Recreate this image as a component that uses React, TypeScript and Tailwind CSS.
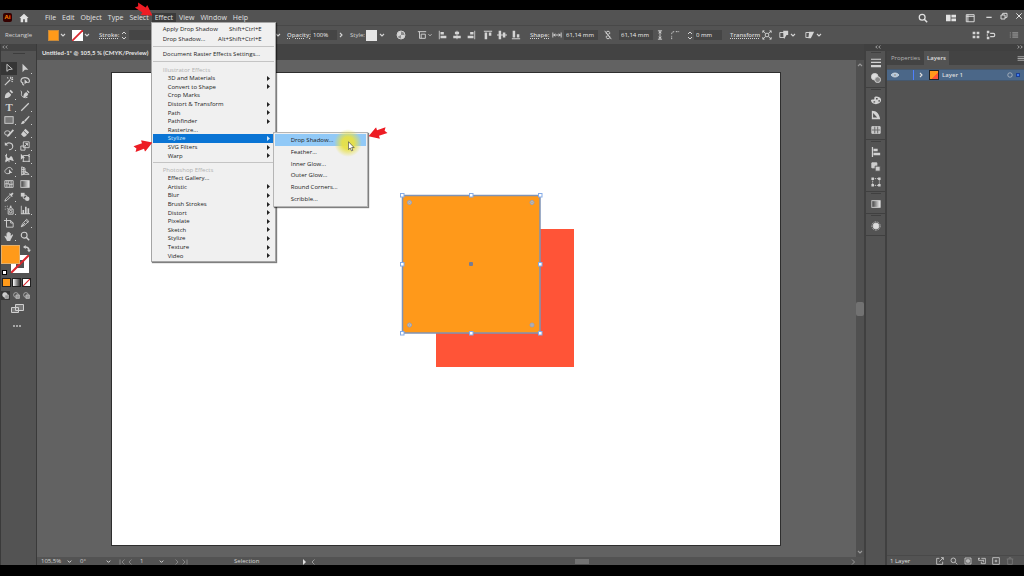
import type { ReactNode } from "react";
import { clsx } from "clsx";

type IconProps = { children: ReactNode; className?: string };

// 12x12 line icon, coloured by the text colour
function Icon({ children, className }: IconProps) {
  return (
    <svg
      viewBox="0 0 12 12"
      className={clsx("shrink-0", className ?? "size-[10px]")}
      fill="none"
      stroke="currentColor"
      strokeWidth="1.1"
      aria-hidden="true"
    >
      {children}
    </svg>
  );
}

const solid = { fill: "currentColor", stroke: "none" };

function Chevron({ className }: { className?: string }) {
  return (
    <Icon className={className ?? "h-[8px] w-[8px]"}>
      <path d="M3 4.5 6 7.5 9 4.5" strokeWidth="1.7" />
    </Icon>
  );
}

function Stepper({ label }: { label: string }) {
  return (
    <button aria-label={label} className="w-[6px] shrink-0">
      <svg viewBox="0 0 6 11" className="h-[11px] w-[6px]" fill="none" stroke="currentColor">
        <path d="M1 4 3 2 5 4M1 7 3 9 5 7" />
      </svg>
    </button>
  );
}

const tools: { name: string; icon: ReactNode; more?: boolean }[] = [
  { name: "Selection", icon: <path d="M3.5 1.5v8.5L6 7.8l4-.5z" /> },
  { name: "Direct Selection", more: true, icon: <path d="M3 1v10l2.8-2.8L10 8z" {...solid} /> },
  {
    name: "Magic Wand",
    icon: <path d="M1 11 7.5 4.5M8 1v2.5M11 4H8.8M4 1.5l1 1.5M10.5 7 9 6M10.5 1.5l-1 1" strokeWidth="1.3" />,
  },
  {
    name: "Lasso",
    icon: (
      <>
        <path d="M4 8.5C0 8 0 2 6 2s6 5 4 6M3.5 8c-1 1 0 3 1.5 2.5" strokeWidth="1.4" />
        <path d="M5.5 4v6l1.8-1.5 2.7-.2z" {...solid} />
      </>
    ),
  },
  { name: "Pen", more: true, icon: <path d="M1 11c0-4 1-6 4.500-7.500L8.500 6.500C7.500 10 5 10.500 1 11zM6.500 2.500 8 1l3 3-1.500 1.500z" {...solid} /> },
  {
    name: "Curvature",
    icon: (
      <>
        <path d="M4 10c0-3.500 1-5 3.500-6.500L10 6C9 9 7 10 4 10zM8 2.500 9 1.500 11.500 4 10.500 5z" {...solid} />
        <path d="M1 2c2 2 0 4 1 6s4 3 7 2" />
      </>
    ),
  },
  {
    name: "Type",
    more: true,
    icon: (
      <text x="6" y="10.500" textAnchor="middle" fontSize="13" fontWeight="bold" fontFamily="Liberation Serif, serif" {...solid}>
        T
      </text>
    ),
  },
  { name: "Line Segment", more: true, icon: <path d="M1.500 10.500 10.500 1.500" strokeWidth="1.400" /> },
  { name: "Rectangle", more: true, icon: <rect x="1" y="2" width="10" height="8" fill="#777" /> },
  { name: "Paintbrush", more: true, icon: <path d="M10.800 1 5 6.500l1.500 1.500L11.500 2zM4.500 7 6 8.500C5.500 10.500 3 11 1 11c1.200-.8.8-3.600 3.500-4z" {...solid} /> },
  {
    name: "Shaper",
    more: true,
    icon: (
      <>
        <ellipse cx="4" cy="6" rx="3.300" ry="2.700" />
        <path d="M10.500 1.500 12 3 6 10l-2.500.8.8-2.500z" {...solid} />
      </>
    ),
  },
  {
    name: "Eraser",
    more: true,
    icon: <path d="M6.500 1 11 5.200 9 7.500 4.500 3zM4 3.600 8.500 8 6 10.500H4L1.200 7.600z" {...solid} />,
  },
  {
    name: "Rotate",
    more: true,
    icon: (
      <>
        <path d="M2.500 4c2-3 8-2 8 2.500C10.500 9 8 10.500 6 10.500" strokeWidth="1.300" />
        <path d="M1 1.500v4h4z" {...solid} />
      </>
    ),
  },
  { name: "Scale", more: true, icon: <path d="M4 1h7v7H4zM1 6h5v5H1zM6 6l3-3M6.500 3H9v2.500" /> },
  {
    name: "Width",
    more: true,
    icon: (
      <>
        <path d="M1 2c2 0 2 3 4 4s2-3 4-2 1 4 3 5c-2 1-4-1-5-1s-3 3-6 2c2-2 1-5 0-8z" {...solid} />
        <path d="M3 1v3M6 8v3M2 11 4 8" />
      </>
    ),
  },
  {
    name: "Free Transform",
    more: true,
    icon: (
      <>
        <path d="M1 1v7l2-1.800 3-.2z" {...solid} />
        <path d="M4 3h7v7H4zM10 2h2M10 4h2M3 10h2M10 10h2" />
      </>
    ),
  },
  {
    name: "Shape Builder",
    more: true,
    icon: (
      <>
        <path d="M6 9C2 10 0 7 1.500 5S4 3 5 2s5 0 5 3" />
        <path d="M6 4v6l1.700-1.500H10z" {...solid} />
      </>
    ),
  },
  { name: "Perspective Grid", more: true, icon: <path d="M2 1v10M2 1l4 1.500v6L2 11M2 4l4 .5M2 7h4M4 1.500V10M6 6l5 4H2M6 8h3" /> },
  { name: "Mesh", icon: <path d="M1 2h10v8H1zM1 6c3-2 6 2 10 0M6 2c-2 3 2 5 0 8M3.500 2v8M8.500 2v8" /> },
  {
    name: "Gradient",
    icon: (
      <>
        <defs>
          <linearGradient id="toolGradient">
            <stop stopColor="#3a3a3a" />
            <stop offset="1" stopColor="#eee" />
          </linearGradient>
        </defs>
        <rect x="1" y="2" width="10" height="8" fill="url(#toolGradient)" />
      </>
    ),
  },
  {
    name: "Eyedropper",
    more: true,
    icon: (
      <>
        <path d="M6.500 4 2 8.500 1 11l2.500-1L8 5.500" />
        <path d="M6 2.500 9.500 6l1-1-1-1 2-2L10 .5l-2 2-1-1z" {...solid} />
      </>
    ),
  },
  {
    name: "Blend",
    icon: (
      <>
        <rect x="1" y="1" width="4.500" height="4.500" {...solid} />
        <circle cx="6" cy="6" r="2.300" />
        <circle cx="8.700" cy="8" r="2.700" {...solid} />
      </>
    ),
  },
  {
    name: "Symbol Sprayer",
    more: true,
    icon: (
      <>
        <path d="M5 5h6v6H5zM6 4.500 7 3h2l1 1.500M8 3V1M7 1.500h2M1 2h1M3.500 1.500h1M1 5h1M3.500 4h1" />
        <circle cx="8" cy="8" r="1.500" />
      </>
    ),
  },
  { name: "Column Graph", more: true, icon: <path d="M1 1h1v9h10v1H1zM3 6h2v4H3zM6 2h2v8H6zM9 4h2v6H9z" {...solid} /> },
  { name: "Artboard", icon: <path d="M3 0v9M0 3h8l3 3v5H3V3M8 3v3h3" /> },
  { name: "Slice", more: true, icon: <path d="M1.500 10.500 3 7l5-5.500L10.500 4 5 9zM1.500 10.500 6 6M7 3l3 2.500" /> },
  {
    name: "Hand",
    more: true,
    icon: <path d="M3 7V3c0-1 1.200-1 1.200 0V1.500c0-1 1.300-1 1.300 0v.3c0-1 1.400-1 1.400 0V3c0-.8 1.200-.8 1.200 0v3l1.500-1.500c1-.8 1.700 0 1 1L8 10.500 7.500 12h-4L3 10.500.8 7c-.6-1 .6-1.600 1.200-.8z" {...solid} />,
  },
  {
    name: "Zoom",
    icon: (
      <>
        <circle cx="5" cy="5" r="3.500" strokeWidth="1.300" />
        <path d="M7.500 7.500 11 11" strokeWidth="1.800" />
      </>
    ),
  },
];

function NoneMark() {
  return (
    <svg viewBox="0 0 11 11" className="size-full" aria-hidden="true">
      <rect width="11" height="11" fill="#fff" />
      <path d="M0 11 11 0" stroke="#d9272e" strokeWidth="1.800" />
    </svg>
  );
}

function Toolbar() {
  return (
    <aside className="flex w-[37px] shrink-0 flex-col border-x border-[#3a3a3a] bg-[#535353] text-[#cfcfcf]">
      <div className="h-[7px] bg-[#434343] pl-px">
        <svg viewBox="0 0 8 6" className="h-[6px] w-[6px]" fill="none" stroke="#bbb">
          <path d="M3 1 1 3 3 5M7 1 5 3 7 5" />
        </svg>
      </div>
      <div className="mx-auto mt-[2px] h-px w-[12px] bg-[#3d3d3d]" />
      <div className="mt-[8px] grid h-[180px] auto-rows-fr grid-cols-2 pr-[3px]">
        {tools.map((tool, i) => (
          <button
            key={tool.name}
            aria-label={tool.name}
            className={clsx("relative flex min-h-0 items-center justify-center", i === 0 && "bg-[#363636]")}
          >
            <Icon>{tool.icon}</Icon>
            {tool.more && <span className="absolute right-px bottom-px size-px bg-[#cfcfcf]" />}
          </button>
        ))}
      </div>

      {/* Fill and stroke */}
      <div className="relative mt-[3px] h-[31px]">
        <div className="absolute top-[10px] left-[10px] size-[18px]">
          <svg viewBox="0 0 18 18" aria-hidden="true">
            <path d="M0 0h18v18H0z" fill="#fff" />
            <path d="M5 5h8v8H5z" fill="#535353" />
            <path d="M0 18 18 0" stroke="#d9272e" strokeWidth="2" />
          </svg>
        </div>
        <button aria-label="Fill" className="absolute top-0 left-0 size-[19px] border border-[#e5b06a] bg-[#ff9a1a]" />
        <button aria-label="Swap fill and stroke" className="absolute top-0 left-[22px]">
          <Icon className="size-[8px]">
            <path d="M3 3c4 0 6 2 6 5" strokeWidth="2" />
            <path d="M0 3 4 0v6zM6 7h6l-3 4z" {...solid} />
          </Icon>
        </button>
        <div className="absolute bottom-px left-px size-[5px] border border-black bg-white" />
      </div>

      <div className="mt-[2px] flex justify-between pr-[5px] pl-px">
        <button aria-label="Color" className="size-[9px] border border-[#222] bg-[#ff9a1a]" />
        <button aria-label="Gradient fill" className="size-[9px] border border-[#222] bg-linear-to-r from-white to-[#333]" />
        <button aria-label="None" className="size-[9px] border border-[#222]">
          <NoneMark />
        </button>
      </div>
      <div className="mt-[4px] flex justify-between pr-[5px]">
        {["Draw Normal", "Draw Behind", "Draw Inside"].map((name, i) => (
          <button key={name} aria-label={name} className={clsx("p-px", i === 0 && "bg-[#363636]")}>
            <Icon className="size-[7px]">
              <circle cx="5" cy="5" r="4" fill={i === 0 ? "currentColor" : "none"} />
              <path d="M5 5h6v6H5z" fill="#999" />
            </Icon>
          </button>
        ))}
      </div>
      <button aria-label="Change Screen Mode" className="mx-auto mt-[4px] pr-[3px]">
        <svg viewBox="0 0 13 10" className="h-[10px] w-[13px]" fill="#777" stroke="currentColor">
          <path d="M4.500.5h8v6h-8zM.5 3.500h7v5h-7z" />
        </svg>
      </button>
      <button aria-label="Edit Toolbar" className="mx-auto mt-[11px] pr-[3px] text-[#a8a8a8]">
        <svg viewBox="0 0 8 2" className="h-[2px] w-[8px]" fill="currentColor">
          <path d="M0 0h2v2H0zM3 0h2v2H3zM6 0h2v2H6z" />
        </svg>
      </button>
    </aside>
  );
}

const illustratorEffects = [
  "3D and Materials",
  "Convert to Shape",
  "Crop Marks",
  "Distort & Transform",
  "Path",
  "Pathfinder",
  "Rasterize...",
  "Stylize",
  "SVG Filters",
  "Warp",
];

const photoshopEffects = [
  "Effect Gallery...",
  "Artistic",
  "Blur",
  "Brush Strokes",
  "Distort",
  "Pixelate",
  "Sketch",
  "Stylize",
  "Texture",
  "Video",
];

const stylizeItems = ["Drop Shadow...", "Feather...", "Inner Glow...", "Outer Glow...", "Round Corners...", "Scribble..."];

const noSubmenu = ["Crop Marks", "Rasterize...", "Effect Gallery..."];

function EffectItems({ items, active }: { items: string[]; active?: string }) {
  return (
    <ul className="flex h-[86px] flex-col">
      {items.map((item) => (
        <li key={item} className="min-h-0 flex-1">
          <button
            className={clsx(
              "flex h-full w-full items-center justify-between pr-[4px] pl-[15px]",
              item === active && "bg-[#0a74d4] text-[#d5e9fa]"
            )}
          >
            {item}
            {!noSubmenu.includes(item) && (
              <svg viewBox="0 0 3 5" className="h-[5px] w-[3px]" fill="currentColor">
                <path d="M0 0 3 2.500 0 5z" />
              </svg>
            )}
          </button>
        </li>
      ))}
    </ul>
  );
}

function EffectMenu() {
  return (
    <div className="absolute top-full left-[-1px] z-20 w-[125px] border border-[#a5a5a5] bg-[#f0f0f0] p-px text-[6px] leading-[8px] whitespace-nowrap text-[#222] shadow-[1px_1px_1px_rgba(0,0,0,0.5)]">
      <button className="flex h-[10px] w-full items-center justify-between pr-[12px] pl-[10px]">
        <span>Apply Drop Shadow</span>
        <span>Shift+Ctrl+E</span>
      </button>
      <button className="flex h-[10px] w-full items-center justify-between pr-[12px] pl-[10px]">
        <span>Drop Shadow...</span>
        <span>Alt+Shift+Ctrl+E</span>
      </button>
      <hr className="mt-[2px] border-[#c4c4c4]" />
      <button className="flex h-[14px] w-full items-center pl-[10px]">Document Raster Effects Settings...</button>
      <hr className="border-[#c4c4c4]" />
      <p className="mt-[4px] pl-[10px] text-[#b0b0b0]">Illustrator Effects</p>
      <EffectItems items={illustratorEffects} active="Stylize" />
      <hr className="mt-[2px] border-[#c4c4c4]" />
      <p className="mt-[3px] pl-[10px] text-[#b0b0b0]">Photoshop Effects</p>
      <EffectItems items={photoshopEffects} />

      {/* Stylize submenu */}
      <ul className="absolute top-[109px] left-[121px] flex h-[75px] w-[95px] flex-col border border-[#b5b5b5] bg-[#f0f0f0] p-px shadow-[1px_1px_1px_rgba(0,0,0,0.5)]">
        {stylizeItems.map((item, i) => (
          <li key={item} className="min-h-0 flex-1">
            <button className={clsx("flex h-full w-full items-center pl-[16px]", i === 0 && "bg-[#91c9f7]")}>{item}</button>
          </li>
        ))}
        <li aria-hidden="true" className="pointer-events-none absolute top-[-4px] left-[60px]">
          <div className="size-[28px] rounded-full bg-[radial-gradient(circle,rgba(232,225,70,0.95)_30%,rgba(240,235,110,0)_70%)]" />
          <svg viewBox="0 0 8 12" className="absolute top-[12px] left-[14px] h-[11px] w-[7px]">
            <path d="M.5.5v9l2-1.800L4 11l1.500-.6L4.200 7.200H7z" fill="#fff" stroke="#333" strokeWidth=".7" />
          </svg>
        </li>
      </ul>
    </div>
  );
}

function MenuBar() {
  return (
    <header className="flex h-[15px] shrink-0 items-center bg-[#535353] pr-px pl-[3px] text-[#e2e2e2]">
      <span className="flex h-[9px] w-[9px] items-center justify-center rounded-[2px] bg-[#330000] text-[6px] font-bold text-[#ff7c00]">
        Ai
      </span>
      <button aria-label="Home" className="ml-[7px]">
        <Icon className="size-[10px]">
          <path d="M6 1 .5 6H2v5h3V7.500h2V11h3V6h1.500z" {...solid} />
        </Icon>
      </button>
      <nav className="ml-[13px] flex text-[7px] leading-[9px]">
        {["File", "Edit", "Object", "Type", "Select", "Effect", "View", "Window", "Help"].map((name) => (
          <div key={name} className="relative h-[9px]">
            <button className={clsx("block px-[3px]", name === "Effect" && "bg-[#3a3a3a]")}>{name}</button>
            {name === "Effect" && <EffectMenu />}
          </div>
        ))}
      </nav>
      <button aria-label="Search" className="ml-auto">
        <Icon>
          <circle cx="5" cy="5" r="3.500" strokeWidth="1.500" />
          <path d="M7.500 7.500 11 11" strokeWidth="1.800" />
        </Icon>
      </button>
      <button aria-label="Arrange Documents" className="ml-[18px]">
        <Icon>
          <path d="M0 2h5.500v8H0zM6.500 2H12v3.500H6.500zM6.500 6.500H12V10H6.500z" {...solid} />
        </Icon>
      </button>
      <button aria-label="Workspace" className="ml-[9px]">
        <Icon>
          <path d="M1.500 2h9.500v8.500H1.500zM3.500 2v8.500M1.500 4H11" />
        </Icon>
      </button>
      <button aria-label="Minimize" className="mb-[3px] ml-[10px]">
        <Icon className="size-[8px]">
          <path d="M2 8h8" strokeWidth="1.800" />
        </Icon>
      </button>
      <button aria-label="Restore" className="mb-[3px] ml-[7px]">
        <Icon className="size-[8px]">
          <path d="M1.500 4.500h6v6h-6zM4 4.500V2h6.500v6H7.500" strokeWidth="1.400" />
        </Icon>
      </button>
      <button aria-label="Close" className="mb-[3px] ml-[7px]">
        <Icon className="size-[8px]">
          <path d="M2 2l8 8M10 2l-8 8" strokeWidth="1.500" />
        </Icon>
      </button>
    </header>
  );
}

const alignIcons = [
  { name: "Align Left", d: "M1 1h1v10H1zM3 2.500h4v3H3zM3 7h7v3H3z" },
  { name: "Align Center", d: "M5.500 1h1v10h-1zM3.500 2h5v3h-5zM1.500 7h9v3h-9z" },
  { name: "Align Right", d: "M10 1h1v10h-1zM5 2.500h4v3H5zM2 7h7v3H2z" },
  { name: "Align Top", d: "M1 1h10v1H1zM2 3h3v8H2zM7 3h3v4H7z" },
  { name: "Align Middle", d: "M0 5.500h12v1H0zM2 1h3v10H2zM7 3h3v6H7z" },
  { name: "Align Bottom", d: "M1 10h10v1H1zM2 1h3v8H2zM7 5h3v4H7z" },
];

const field = "h-[10px] min-w-0 shrink-0 bg-[#454545] pl-[2px] text-[#ececec] outline-none";

function OptionsBar() {
  return (
    <div className="flex h-[19px] shrink-0 items-center overflow-hidden border-t border-[#484848] bg-[#535353] pr-[5px] pl-[5px] text-[6px] leading-[8px] whitespace-nowrap text-[#d4d4d4]">
      <span className="w-[43px] shrink-0">Rectangle</span>
      <button aria-label="Fill color" className="size-[11px] shrink-0 border border-[#c98a3a] bg-[#ff9a1a]" />
      <Chevron />
      <button aria-label="Stroke color" className="ml-[5px] size-[11px] shrink-0">
        <NoneMark />
      </button>
      <Chevron />
      <label htmlFor="stroke" className="ml-[8px] w-[22px] shrink-0 font-semibold underline decoration-dotted">
        Stroke:
      </label>
      <Stepper label="Stroke weight" />
      <input id="stroke" className={clsx(field, "ml-[2px] w-[145px]")} />
      <Chevron />
      <label htmlFor="opacity" className="ml-[5px] w-[24px] shrink-0 font-semibold underline decoration-dotted">
        Opacity:
      </label>
      <input id="opacity" defaultValue="100%" className={clsx(field, "w-[26px]")} />
      <Chevron className="size-[8px] -rotate-90" />
      <span className="ml-[5px] w-[16px] shrink-0">Style:</span>
      <button aria-label="Graphic style" className="size-[11px] shrink-0 bg-[#e6e6e6]" />
      <Chevron className="ml-px size-[8px]" />
      <button aria-label="Recolor Artwork" className="ml-[10px] shrink-0">
        <Icon>
          <circle cx="6" cy="6" r="4.800" fill="#8a8a8a" />
          <path d="M6 1.500A4.500 4.500 0 0 0 2 8l4-2zM6 6h4.500A4.500 4.500 0 0 1 6 10.500z" {...solid} />
        </Icon>
      </button>
      <button aria-label="Align To" className="ml-[11px] flex shrink-0 items-center">
        <Icon>
          <path d="M1 2h10M3 2v8h7V5H5v5" />
        </Icon>
        <Chevron className="size-[6px]" />
      </button>
      <div className="ml-[5px] flex shrink-0 gap-[4px]">
        {alignIcons.map(({ name, d }, i) => (
          <button key={name} aria-label={name} className={clsx(i === 3 && "ml-[3px]")}>
            <Icon>
              <path d={d} {...solid} />
            </Icon>
          </button>
        ))}
      </div>
      <label htmlFor="width" className="ml-[9px] w-[22px] shrink-0 font-semibold underline decoration-dotted">
        Shape:
      </label>
      <Icon>
        <path d="M1 3v6M11 3v6M2 6h8M4 4.500 2 6l2 1.500M8 4.500 10 6 8 7.500" />
      </Icon>
      <input id="width" defaultValue="61,14 mm" className={clsx(field, "ml-[2px] w-[34px]")} />
      <button aria-label="Constrain proportions" className="ml-[5px] shrink-0">
        <Icon>
          <path d="M4 5V3c0-2 4-2 4 0v2M4 7v2c0 2 4 2 4 0V7M6 4v4M2 1l8 10" />
        </Icon>
      </button>
      <input aria-label="Height" defaultValue="61,14 mm" className={clsx(field, "ml-[6px] w-[34px]")} />
      <Icon className="ml-[2px] size-[10px]">
        <path d="M3.500 1h5M3.500 11h5M6 1v10M4.500 4 6 2l1.500 2M4.500 8 6 10l1.500-2" />
      </Icon>
      <Icon className="ml-[5px] size-[10px]">
        <path d="M2 11V7M2 5c0-2 1-3 3-3M7 2h4" strokeDasharray="2 1" />
      </Icon>
      <div className="ml-[7px] flex">
        <Stepper label="Corner radius" />
      </div>
      <input aria-label="Radius" defaultValue="0 mm" className={clsx(field, "ml-px w-[28px]")} />
      <button className="ml-[8px] w-[32px] shrink-0 text-left font-semibold underline decoration-dotted">Transform</button>
      <button aria-label="Isolate" className="shrink-0">
        <Icon>
          <path d="M4 4h4v4H4zM1 1l2.500 2.500M11 1 8.500 3.500M1 11l2.500-2.500M11 11 8.500 8.500M1 3.500V1h2M11 3.500V1H9M1 8.500V11h2M11 8.500V11H9" />
        </Icon>
      </button>
      <button aria-label="Select Similar" className="ml-[7px] flex shrink-0 items-center">
        <Icon>
          <path d="M1 3h5v6H1z" />
          <path d="M5 1h6v5H9L6 11z" {...solid} />
        </Icon>
        <Chevron />
      </button>
      <button aria-label="Edit Similar" className="ml-[8px] flex shrink-0 items-center">
        <Icon>
          <path d="M1 3h5v6H1z" />
          <path d="M5 2h6L7 10H4z" {...solid} />
        </Icon>
        <Chevron />
      </button>
      <button aria-label="Snap to Grid" className="ml-auto shrink-0">
        <Icon className="size-[8px]">
          <path d="M1 1h4v4H1zM7 1h4v4H7zM1 7h4v4H1zM7 7h4v4H7z" {...solid} />
        </Icon>
      </button>
      <button aria-label="Snap to Point" className="ml-[6px] shrink-0">
        <Icon>
          <path d="M1 1h3v3H1zM1 8h3v3H1zM1 4.500h1v3H1z" {...solid} />
          <path d="M5 4h4c2 0 2 4 0 4H5" strokeWidth="1.400" />
        </Icon>
      </button>
      <button aria-label="Control panel options" className="ml-[13px] shrink-0 opacity-70">
        <Icon>
          <path d="M1 3.500h1M4 3.500h7M1 6h1M4 6h7M1 8.500h1M4 8.500h7" />
        </Icon>
      </button>
    </div>
  );
}

function Artwork() {
  const handles = [3, 72, 141];
  return (
    <svg viewBox="0 0 176 176" className="absolute top-[119px] left-[287px] h-[176px] w-[176px]" role="img" aria-label="Two squares">
      <rect x="37" y="37" width="138" height="138" fill="#ff5437" />
      <rect x="3.500" y="3.500" width="137.500" height="137.500" fill="#ff991a" stroke="#7f93b5" strokeWidth="1.500" />
      {handles.map((x) =>
        handles.map((y) =>
          x === 72 && y === 72 ? (
            <rect key="center" x="70" y="70" width="4" height="4" rx="1" fill="#777c94" />
          ) : (
            <rect key={`${x}-${y}`} x={x - 1.5} y={y - 1.5} width="3.500" height="3.500" fill="#fff" stroke="#84abe8" />
          )
        )
      )}
      {[10.5, 133].map((x) =>
        [10.5, 133].map((y) => (
          <g key={`${x}-${y}`} fill="none" stroke="#8f9fc4">
            <circle cx={x} cy={y} r="2" fill="#d9c29a" />
            <circle cx={x} cy={y} r=".4" />
          </g>
        ))
      )}
    </svg>
  );
}

function StatusBar() {
  return (
    <footer className="flex h-[8px] shrink-0 items-end bg-[#535353] text-[6px] leading-[7px] whitespace-nowrap text-[#d4d4d4]">
      <div className="flex w-[266px] shrink-0 items-end pl-[4px]">
        <button className="flex h-[7px] w-[39px]">
          <span className="w-[25px] text-left">105,5%</span>
          <Chevron className="size-[7px]" />
        </button>
        <button className="flex h-[7px] w-[39px]">
          <span className="w-[25px] text-left">0°</span>
          <Chevron className="size-[7px]" />
        </button>
        <svg viewBox="0 0 14 7" className="mr-[7px] h-[7px] w-[14px]" fill="none" stroke="#858585">
          <path d="M1 1.500v5M5.500 1.500 3 4l2.500 2.500M12.500 1.500 10 4l2.500 2.500" />
        </svg>
        <button className="flex h-[7px] w-[34px]">
          <span className="w-[18px] text-left">1</span>
          <Chevron className="size-[7px]" />
        </button>
        <svg viewBox="0 0 14 7" className="h-[7px] w-[14px]" fill="none" stroke="#858585">
          <path d="M1.500 1.500 4 4 1.500 6.500M8.500 1.500 11 4 8.500 6.500M13 1.500v5" />
        </svg>
        <span className="ml-auto w-[69px]">Selection</span>
      </div>
      <svg viewBox="0 0 14 7" className="h-[7px] w-[14px] shrink-0" fill="none" stroke="#999">
        <path d="M0 1 3 4 0 7z" fill="#ddd" stroke="none" />
        <path d="M11.500 1.500 9 4l2.500 2.500" />
      </svg>
      <div className="mb-px ml-[258px] h-[5px] w-[14px] bg-[#727272]" />
      <svg viewBox="0 0 5 7" className="ml-auto h-[7px] w-[5px]" fill="none" stroke="#999">
        <path d="M1 1.500 3.500 4 1 6.500" />
      </svg>
      <div className="w-[8px]" />
    </footer>
  );
}

function Workspace() {
  return (
    <main className="flex min-w-0 flex-1 flex-col">
      <div className="flex h-[16px] shrink-0 items-center bg-[#434343]">
        <button className="flex h-full items-center border-r border-[#383838] bg-[#4b4b4b] pr-2 pl-[5px] font-['Lato',sans-serif] text-[6px] font-bold whitespace-nowrap text-[#e6e6e6]">
          Untitled-1* @ 105,5 % (CMYK/Preview)
        </button>
      </div>
      <div className="flex min-h-0 flex-1">
        <div className="flex min-w-0 flex-1 bg-[#626262] pt-[12px] pr-[75px] pb-[11px] pl-[74px]">
          <div className="relative min-w-0 flex-1 border border-[#2e2e2e] bg-white">
            <Artwork />
          </div>
        </div>
        <div className="flex w-[8px] flex-col items-center justify-between bg-[#505050] py-px text-[#999]">
          <Chevron className="size-[8px] rotate-180" />
          <div className="h-[14px] w-[8px] rounded-[2px] bg-[#727272]" />
          <Chevron />
        </div>
      </div>
      <StatusBar />
    </main>
  );
}

const dockGroups: { name: string; icon: ReactNode }[][] = [
  [
    { name: "Stroke", icon: <path d="M0 1h12v1H0zM0 4.500h12v1.500H0zM0 8.500h12v2.500H0z" {...solid} /> },
    {
      name: "Transparency",
      icon: (
        <>
          <circle cx="4.500" cy="4.500" r="4" fill="#ddd" />
          <circle cx="8" cy="8" r="3.500" fill="#888" />
        </>
      ),
    },
  ],
  [
    {
      name: "Color",
      icon: (
        <path
          d="M0 6c2-1 3 0 4-1V3c0-2 7-2 8 2s-3 6-6 6-6-2-6-5zM6 3.500v2h2v-2zM9 6v2h1.500V6zM3 7.500V9h2V7.500z"
          fillRule="evenodd"
          {...solid}
        />
      ),
    },
    { name: "Color Guide", icon: <path d="M1 1c6 0 9 4 10 10H1zM2.500 9h5L2.500 3.500z" fillRule="evenodd" {...solid} /> },
    {
      name: "Swatches",
      icon: (
        <>
          <path d="M1 2h10v8H1z" fill="#c4c4c4" />
          <path d="M1 6h10M4.500 2v8M8 2v8" stroke="#666" />
        </>
      ),
    },
  ],
  [
    { name: "Align", icon: <path d="M1 0h1.500v12H1zM3 2h5v3H3zM3 7h8v3H3z" {...solid} /> },
    {
      name: "Pathfinder",
      icon: (
        <>
          <path d="M1 1h6v6H1z" fill="#ccc" />
          <path d="M5 5h6v6H5z" fill="#ccc" stroke="#535353" />
        </>
      ),
    },
    {
      name: "Transform",
      icon: (
        <>
          <path d="M2 2h8v8H2z" strokeDasharray="1.500 1" />
          <path d="M.5.5h3v3h-3zM8.500.5h3v3h-3zM.5 8.500h3v3h-3zM8.500 8.500h3v3h-3z" {...solid} />
        </>
      ),
    },
  ],
  [{ name: "Gradient", icon: <rect x="1" y="2" width="10" height="8" fill="url(#toolGradient)" /> }],
  [
    {
      name: "Appearance",
      icon: (
        <>
          <circle cx="6" cy="6" r="3.500" fill="#ddd" />
          <circle cx="6" cy="6" r="5" strokeDasharray="1 1" />
        </>
      ),
    },
  ],
];

function Dock() {
  return (
    <aside className="flex w-[23px] shrink-0 flex-col border-x-2 border-[#404040] bg-[#535353] text-[#d2d2d2]">
      <div className="flex h-[7px] shrink-0 justify-end bg-[#404040] pr-[4px]">
        <svg viewBox="0 0 8 6" className="h-[6px] w-[6px]" fill="none" stroke="#ccc">
          <path d="M3 1 1 3 3 5M7 1 5 3 7 5" />
        </svg>
      </div>
      {dockGroups.map((group) => (
        <div key={group[0].name} className="flex flex-col items-center border-b border-[#404040] pt-px pb-[4px]">
          <div className="mb-[5px] h-px w-[10px] bg-[#404040]" />
          <div className="flex flex-col gap-[5px]">
            {group.map(({ name, icon }) => (
              <button key={name} aria-label={name}>
                <Icon>{icon}</Icon>
              </button>
            ))}
          </div>
        </div>
      ))}
    </aside>
  );
}

const panelActions = [
  { name: "Collect for Export", d: "M5 2H1v9h9V7M5 7l6-6M7.500 1H11v3.500" },
  { name: "Locate Object", d: "M1.500 5a3.500 3.500 0 1 0 7 0 3.500 3.500 0 1 0-7 0M8 8l3 3" },
  { name: "Clipping Mask", d: "M1.500 1.500h9v9h-9zM4 4h4v4H4zM4 5.500h4M4 6.500h4" },
  { name: "New Sublayer", d: "M5 2h6v8H5V7M0 2h3M3 5h5M1 2v3h2M8 4v4" },
  { name: "New Layer", d: "M1 1h10v10H1zM6 4v4M4 6h4" },
];

function LayersPanel() {
  return (
    <aside className="flex w-[137px] shrink-0 flex-col bg-[#535353] text-[6px] leading-[8px] text-[#dedede]">
      <div className="flex h-[7px] shrink-0 justify-end bg-[#404040] pr-px">
        <svg viewBox="0 0 8 6" className="h-[6px] w-[6px]" fill="none" stroke="#ccc">
          <path d="M1 1 3 3 1 5M5 1 7 3 5 5" />
        </svg>
      </div>
      <div className="flex h-[14px] shrink-0 items-stretch bg-[#434343]">
        <button className="w-[37px] text-[#b5b5b5]">Properties</button>
        <button className="w-[25px] bg-[#535353] font-semibold">Layers</button>
        <button aria-label="Panel menu" className="ml-auto">
          <Icon className="size-[7px]">
            <path d="M1 3h11M1 6h11M1 9h11" />
          </Icon>
        </button>
      </div>
      <div className="mt-[4px] flex h-[12px] items-center border-y border-[#45586e] bg-[#4b6788] pl-[4px]">
        <button aria-label="Toggle visibility">
          <Icon className="size-[8px]">
            <path d="M0 6c3-4 9-4 12 0-3 4-9 4-12 0z" fill="#a9c4de" />
            <circle cx="6" cy="6" r="1.500" fill="#333" />
          </Icon>
        </button>
        <div className="ml-[14px] h-full w-px bg-[#4f80ff]" />
        <Chevron className="ml-[3px] size-[8px] -rotate-90" />
        <div className="ml-[4px] size-[10px] border border-[#222] bg-linear-to-br from-[#ff991a] from-60% to-[#ff5437] to-60%" />
        <span className="ml-[3px] font-semibold">Layer 1</span>
        <button aria-label="Target layer" className="ml-auto">
          <Icon className="size-[6px]">
            <circle cx="6" cy="6" r="4.500" />
          </Icon>
        </button>
        <div className="mr-[4px] ml-[3px] size-[4px] border border-[#1b3f94] bg-[#3f7bf0]" />
      </div>
      <div className="mt-auto flex h-[10px] items-center border-t border-[#494949] pr-[10px] pl-[3px]">
        <span className="mr-auto">1 Layer</span>
        <div className="flex gap-[6px]">
          {panelActions.map(({ name, d }) => (
            <button key={name} aria-label={name}>
              <Icon className="size-[8px]">
                <path d={d} />
              </Icon>
            </button>
          ))}
          <button aria-label="Delete" className="opacity-30">
            <Icon className="size-[8px]">
              <path d="M1 3h10M2.500 3v8h7V3M4.500 3V1h3v2" />
            </Icon>
          </button>
        </div>
      </div>
    </aside>
  );
}

// Red pointer, tip on the right, turned by className
function Arrow({ className }: { className: string }) {
  return (
    <svg viewBox="0 0 20 12" className={clsx("pointer-events-none absolute z-30 h-[12px] w-[20px]", className)} aria-hidden="true">
      <path d="M1 3h9V0l10 6-10 6V9H1l2-3z" fill="#ed1c24" />
    </svg>
  );
}

export default function App() {
  return (
    <div className="relative flex h-screen flex-col overflow-hidden bg-black pt-[10px] pb-[11px] font-['Open_Sans','Noto_Sans',sans-serif]">
      <MenuBar />
      <OptionsBar />
      <div className="flex min-h-0 flex-1">
        <Toolbar />
        <Workspace />
        <Dock />
        <LayersPanel />
      </div>
      <Arrow className="top-[4px] left-[134px] rotate-[33deg]" />
      <Arrow className="top-[140px] left-[133px] -rotate-[20deg]" />
      <Arrow className="top-[127px] left-[368px] rotate-[161deg]" />
    </div>
  );
}
